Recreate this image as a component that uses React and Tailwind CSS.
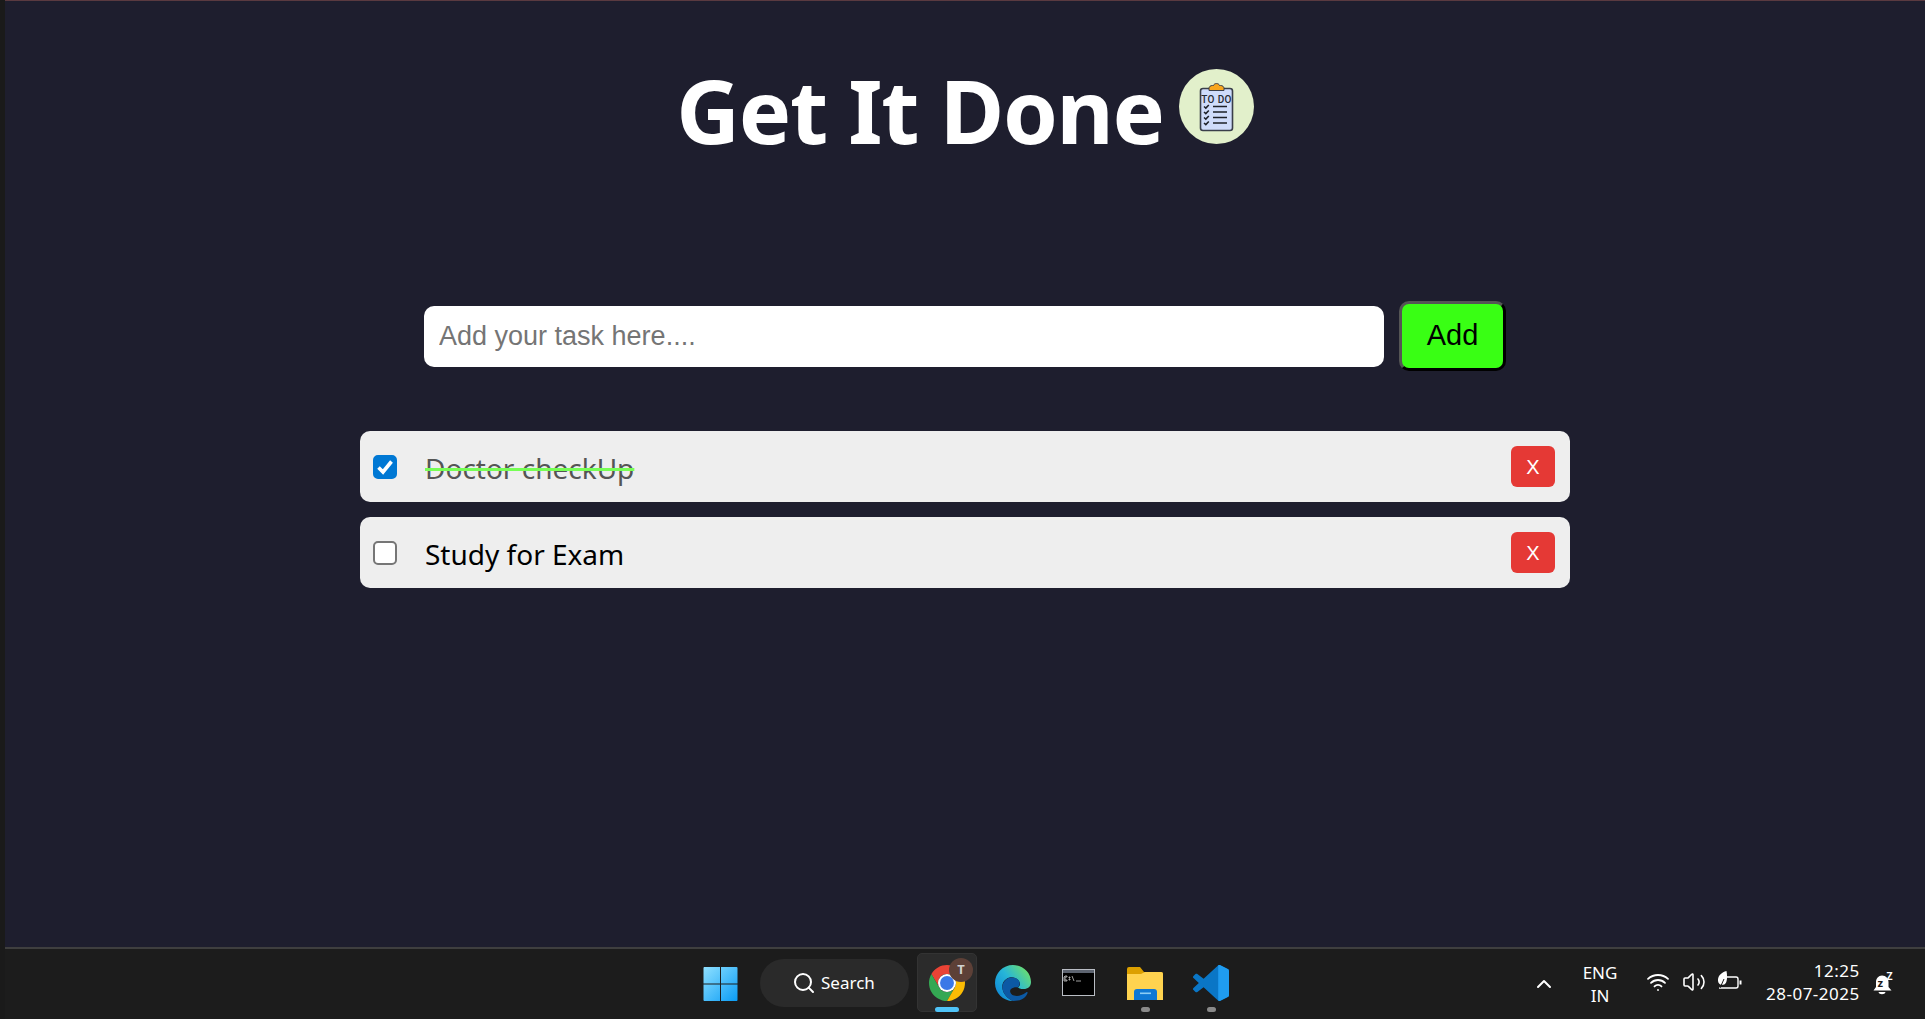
import { ChevronUp, Search, Volume2, Wifi } from "lucide-react";

const tasks = [
  { id: 1, text: "Doctor checkUp", done: true },
  { id: 2, text: "Study for Exam", done: false },
];

const TodoBadge = () => (
  <svg viewBox="0 0 75 75" className="ml-[15px] mt-[-7px] h-[75px] w-[75px] shrink-0">
    <circle cx="37.5" cy="37.5" r="37.5" fill="#e2f0cb" />
    <rect x="21.500" y="19.500" width="32" height="42" rx="2.5" fill="#cfdcfb" stroke="#3a3f4a" strokeWidth="1.6" />
    <path d="M30 21.500v-2c0-2 1.500-3 3.500-3h1c.6-2.600 5.400-2.600 6 0h1c2 0 3.500 1 3.500 3v2z" fill="#f7a51e" stroke="#3a3f4a" strokeWidth="1" />
    <text x="37.5" y="33.500" textAnchor="middle" fontSize="10" fontWeight="500" fontFamily="Roboto, sans-serif" fill="#262a33" letterSpacing="0.4">TO DO</text>
    <g fill="none" stroke="#1d2028" strokeWidth="1.5">
      <path d="M25 37.500l1.800 1.600 3-3.200M25 43l1.800 1.600 3-3.200M25 48.500l1.800 1.600 3-3.200M25 54l1.800 1.600 3-3.200" />
      <path d="M34 37.500h14M34 43h14M34 48.500h14M34 54h14" />
    </g>
  </svg>
);

const TaskCheckbox = ({ done }) => (
  <span className="relative h-[24px] w-[24px] shrink-0">
    <input
      type="checkbox"
      defaultChecked={done}
      className="block h-[24px] w-[24px] appearance-none rounded-[5px] border-2 border-[#767676] bg-white checked:border-[#0078d4] checked:bg-[#0078d4]"
    />
    {done && (
      <svg viewBox="0 0 24 24" className="pointer-events-none absolute inset-0 h-[24px] w-[24px]" fill="none" stroke="#fff" strokeWidth="3.6">
        <path d="M5.500 12.500l4.500 4.500 8.500-10.500" />
      </svg>
    )}
  </span>
);

const TaskRow = ({ task }) => (
  <li className="flex h-[71px] items-center rounded-[10px] bg-[#eeeeee] pl-[13px] pr-[15px]">
    <TaskCheckbox done={task.done} />
    <span
      className={`ml-[28px] mt-[2px] font-['Noto_Sans',sans-serif] text-[28px] ${
        task.done ? "text-[#555555] line-through decoration-[#77ff55] decoration-[3px]" : "text-black"
      }`}
    >
      {task.text}
    </span>
    <button className="ml-auto h-[41px] w-[44px] rounded-[6px] bg-[#e53935] font-['Liberation_Sans',sans-serif] text-[20px] text-white">
      X
    </button>
  </li>
);

const WindowsLogo = () => (
  <svg viewBox="0 0 35 35" className="h-[34px] w-[35px]">
    <defs>
      <linearGradient id="win" x1="0" y1="0" x2="1" y2="1">
        <stop offset="0" stopColor="#8fe0ff" />
        <stop offset="1" stopColor="#0a9cf5" />
      </linearGradient>
    </defs>
    <path d="M1 0h16v17H0V1a1 1 0 0 1 1-1zM18 0H34a1 1 0 0 1 1 1v16H18zM0 18h17V35H1a1 1 0 0 1-1-1zM18 18H35V34a1 1 0 0 1-1 1H18z" fill="url(#win)" />
  </svg>
);

const ChromeIcon = () => (
  <svg viewBox="2 2 44 44" className="h-[36px] w-[36px]">
    <path d="M4.950 13A22 22 0 0 1 43.050 13H24A11 11 0 0 0 14.470 29.500Z" fill="#ea4335" />
    <path d="M4.950 13L14.470 29.500A11 11 0 0 0 33.530 29.500L24 46A22 22 0 0 1 4.950 13Z" fill="#34a853" />
    <path d="M43.050 13H24A11 11 0 0 1 33.530 29.500L24 46A22 22 0 0 0 43.050 13Z" fill="#fbbc04" />
    <circle cx="24" cy="24" r="11" fill="#fff" />
    <circle cx="24" cy="24" r="8.500" fill="#3b78e7" />
  </svg>
);

const EdgeIcon = () => (
  <svg viewBox="0 0 36 36" className="h-[36px] w-[36px]">
    <defs>
      <linearGradient id="edge" x1="0" y1="1" x2="1" y2="0.2">
        <stop offset="0" stopColor="#0a7fd6" />
        <stop offset="0.55" stopColor="#27b6d8" />
        <stop offset="1" stopColor="#6fe06a" />
      </linearGradient>
    </defs>
    <path d="M18 0C28 0 36 7.500 36 17c0 4.500-3 7-7.500 7-3 0-5-.8-5.500-1.600 2-1.400 2.500-3.400 1.500-5.400C22.500 13 18.500 11.500 14.500 12.500 9 14 6.500 19 7.500 24c1 5 5 9.500 10.500 12C8 36 0 28 0 18 0 8 8 0 18 0z" fill="url(#edge)" />
    <path d="M7.500 24c-1-5 3-11 8.500-11.500 4-.4 7.500 1.600 8.500 4.500.6 2-.4 4-1.500 5.400-1.500-.4-5-.4-7 1.600-2 2-.5 5.500 3 6.500 3.500 1 8 0 12-3 1-.7 2-.5 1.500.7C30 34 24.500 36 18 36 12.500 33.500 8.500 29 7.500 24z" fill="#0c59a4" />
  </svg>
);

const TerminalIcon = () => (
  <svg viewBox="0 0 33 27" className="h-[27px] w-[33px]">
    <rect width="33" height="27" fill="#b9bdc4" />
    <rect x="1" y="4" width="31" height="22" fill="#000" />
    <rect x="1" y="1" width="31" height="3" fill="#5d6470" />
    <path d="M3 7h2v1H3v3h2v1H2V8zM7 8h1v1H7zM7 10h1v1H7zM10 7l2 5M14 12h5" stroke="#c8c8c8" strokeWidth="0.8" fill="none" />
  </svg>
);

const FolderIcon = () => (
  <svg viewBox="0 0 36 33" className="h-[33px] w-[36px]">
    <path d="M0 2a2 2 0 0 1 2-2h11l4 5h17a2 2 0 0 1 2 2v6H0z" fill="#dca000" />
    <path d="M0 7h14l4-2h16a2 2 0 0 1 2 2v26H0z" fill="#ffd34f" />
    <path d="M7 33v-8a3 3 0 0 1 3-3h17a3 3 0 0 1 3 3v8z" fill="#0f78d4" />
    <rect x="13" y="25.500" width="11" height="1.600" fill="#8ccdf5" />
  </svg>
);

const VSCodeIcon = () => (
  <svg viewBox="0 0 100 100" className="h-[36px] w-[36px]">
    <defs>
      <clipPath id="vsright">
        <rect x="70" y="0" width="30" height="100" />
      </clipPath>
      <path
        id="vsmain"
        d="M70.900 99.300C72.500 99.900 74.300 99.900 75.900 99.100L96.500 89.200C98.600 88.200 100 86 100 83.600V16.400C100 14 98.600 11.800 96.500 10.800L75.900.9C73.800-.1 71.300.1 69.500 1.400 69.300 1.600 69 1.800 68.800 2.100L29.400 38 12.200 25C10.600 23.800 8.400 23.900 6.900 25.300L1.400 30.300C-.5 31.900-.5 34.800 1.300 36.400L16.200 50 1.300 63.600C-.5 65.200-.5 68.100 1.400 69.700L6.900 74.700C8.400 76.100 10.600 76.200 12.200 75L29.400 62 68.800 97.900C69.400 98.500 70.100 99 70.900 99.300ZM75 27.200L45.100 50 75 72.800Z"
      />
    </defs>
    <use href="#vsmain" fill="#0a76c6" />
    <use href="#vsmain" fill="#1f9cf0" clipPath="url(#vsright)" />
  </svg>
);

const BatteryLeaf = () => (
  <svg viewBox="0 0 24 24" className="h-[24px] w-[24px]" fill="none" stroke="#fff" strokeWidth="1.4">
    <path d="M9 7h9a2 2 0 0 1 2 2v7a2 2 0 0 1-2 2H1" />
    <path d="M22.500 10.500v4" strokeWidth="2" />
    <path d="M8.500 1C3 2.500-.500 6.500 0 11c.3 3.500 4 4.500 6 3.500 3.500-1.500 3.500-8.500 2.500-13.500z" fill="#fff" stroke="none" />
    <path d="M2 18l4-9" stroke="#1c1c1c" strokeWidth="1" />
  </svg>
);

const BellIcon = () => (
  <svg viewBox="0 0 21 23" className="h-[23px] w-[21px]">
    <path d="M9 3.500c4 0 6.500 3 6.500 6.500v5l3 3.500H.5l2.500-3.500v-5c0-3.500 2.500-6.500 6-6.500zM5.500 20h7c-.5 3-6.500 3-7 0z" fill="#fff" />
    <text x="4.500" y="14.500" fontSize="11" fontWeight="700" fontFamily="Roboto, sans-serif" fill="#1c1c1c">z</text>
    <text x="13.500" y="8" fontSize="10" fontWeight="700" fontFamily="Roboto, sans-serif" fill="#fff">Z</text>
  </svg>
);

const Taskbar = () => (
  <footer className="flex h-[72px] shrink-0 items-start border-t-2 border-[#3f3f3f] bg-[#1c1c1c] font-['Noto_Sans',sans-serif] text-white">
    {/* Pinned apps */}
    <div className="ml-[698px] mt-[18px]">
      <WindowsLogo />
    </div>
    <div className="ml-[22px] mt-[10px] flex h-[48px] w-[149px] items-center rounded-full bg-[#2a2a2a] pl-[32px]">
      <Search size={24} strokeWidth={2} />
      <span className="ml-[5px] text-[17px]">Search</span>
    </div>
    <div className="relative ml-[8px] mt-[4px] flex h-[59px] w-[60px] justify-center rounded-[5px] border border-[#333333] bg-[#2b2b2b] pt-[11px]">
      <ChromeIcon />
      <span className="absolute left-[31px] top-[4px] flex h-[24px] w-[24px] items-center justify-center rounded-full bg-[#5d4037] text-[13px] font-bold text-[#cfcfcf]">
        T
      </span>
      <span className="absolute bottom-[-1px] left-[17px] h-[5px] w-[24px] rounded-full bg-[#4fc3f7]" />
    </div>
    <div className="ml-[18px] mt-[16px]">
      <EdgeIcon />
    </div>
    <div className="ml-[31px] mt-[20px]">
      <TerminalIcon />
    </div>
    <div className="relative ml-[32px] mt-[18px]">
      <FolderIcon />
      <span className="absolute left-[14px] top-[40px] h-[5px] w-[9px] rounded-full bg-[#8a8a8a]" />
    </div>
    <div className="relative ml-[30px] mt-[16px]">
      <VSCodeIcon />
      <span className="absolute left-[14px] top-[42px] h-[5px] w-[9px] rounded-full bg-[#8a8a8a]" />
    </div>

    {/* System tray */}
    <div className="ml-[303px] mt-[23px]">
      <ChevronUp size={24} strokeWidth={2} />
    </div>
    <div className="ml-[24px] mt-[12px] flex w-[40px] flex-col items-center text-[17px] leading-[23px]">
      <span>ENG</span>
      <span>IN</span>
    </div>
    <div className="ml-[26px] mt-[21px] flex items-center gap-[12px]">
      <Wifi size={24} strokeWidth={1.8} />
      <Volume2 size={24} strokeWidth={1.6} />
      <BatteryLeaf />
    </div>
    <div className="ml-[24px] mt-[10px] flex flex-col items-end text-[17px] leading-[23px] tracking-[0.5px]">
      <span>12:25</span>
      <span>28-07-2025</span>
    </div>
    <div className="ml-[13px] mt-[23px]">
      <BellIcon />
    </div>
  </footer>
);

const App = () => {
  return (
    <div className="flex h-[1019px] w-[1925px] overflow-hidden bg-[#1a1a1a]">
      <div className="w-[5px] shrink-0" />
      <div className="flex min-w-0 flex-1 flex-col">
        <main className="flex flex-1 flex-col items-center border-t border-[#5a3a40] bg-[#1e1e2e]">
          <header className="mt-[47px] flex h-[124px] items-center">
            <h1 className="font-['Noto_Sans',sans-serif] text-[88px] font-bold leading-none tracking-[-1.3px] text-white">Get It Done</h1>
            <TodoBadge />
          </header>

          <div className="mt-[129px] flex items-center gap-[15px]">
            <input
              type="text"
              placeholder="Add your task here...."
              className="h-[61px] w-[960px] rounded-[10px] bg-white px-[15px] font-['Liberation_Sans',sans-serif] text-[27px] text-black outline-none placeholder:text-[#757575]"
            />
            <button className="h-[70px] w-[107px] rounded-[10px] border-[3px] border-b-black border-l-[#555555] border-r-black border-t-[#555555] bg-[#39ff14] font-['Liberation_Sans',sans-serif] text-[29px] text-black">
              Add
            </button>
          </div>

          <ul className="mt-[60px] flex w-[1210px] flex-col gap-[15px]">
            {tasks.map((task) => (
              <TaskRow key={task.id} task={task} />
            ))}
          </ul>
        </main>
        <Taskbar />
      </div>
    </div>
  );
};

export default App;
